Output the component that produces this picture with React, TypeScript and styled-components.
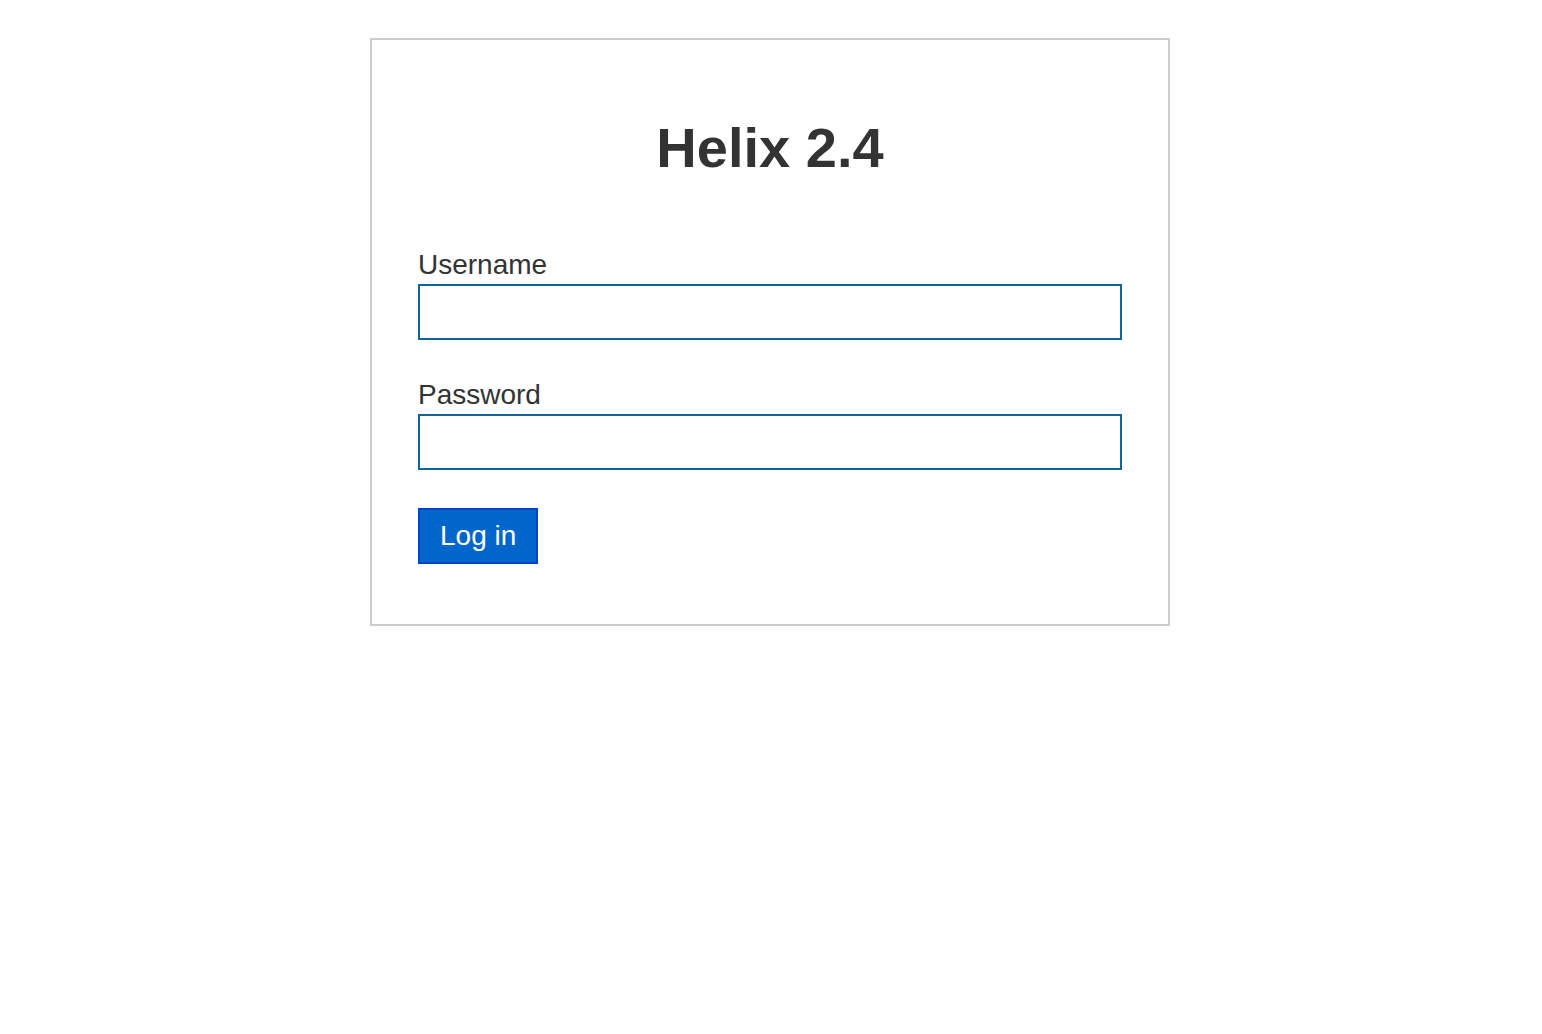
import styled, { createGlobalStyle } from 'styled-components';

const GlobalStyle = createGlobalStyle`
  html, body {
    margin: 0;
    padding: 0;
    background: #ffffff;
    font-family: 'Liberation Sans', Arial, sans-serif;
    color: #333333;
  }
`;

const Page = styled.div`
  padding: 38px 2px 0 0;
`;

const Card = styled.form`
  box-sizing: border-box;
  width: 800px;
  margin: 0 auto;
  padding: 76px 46px 60px;
  border: 2px solid #cccccc;
  background: #ffffff;
`;

const Title = styled.h1`
  margin: 0 0 69px;
  font-size: 56px;
  line-height: 64px;
  font-weight: 700;
  text-align: center;
  color: #333333;
`;

const Field = styled.div<{ $last?: boolean }>`
  margin-bottom: ${(p) => (p.$last ? '38px' : '39px')};
`;

const Label = styled.label`
  display: block;
  margin-bottom: 3px;
  font-size: 28px;
  line-height: 32px;
  color: #333333;
`;

const Input = styled.input`
  display: block;
  box-sizing: border-box;
  width: 100%;
  height: 56px;
  margin: 0;
  padding: 0 12px;
  border: 2px solid #10659c;
  border-radius: 0;
  font-family: inherit;
  font-size: 28px;
  color: #333333;
  background: #ffffff;
  outline: none;
`;

const SubmitButton = styled.button`
  box-sizing: border-box;
  height: 56px;
  margin: 0;
  padding: 0 20px;
  border: 2px solid #0046cc;
  border-radius: 0;
  background: #0066cc;
  color: #ffffff;
  font-family: inherit;
  font-size: 28px;
  line-height: 32px;
  cursor: pointer;
`;

export default function App() {
  return (
    <Page>
      <GlobalStyle />
      <Card onSubmit={(e) => e.preventDefault()}>
        <Title>Helix 2.4</Title>
        <Field>
          <Label htmlFor="username">Username</Label>
          <Input id="username" type="text" />
        </Field>
        <Field $last>
          <Label htmlFor="password">Password</Label>
          <Input id="password" type="password" />
        </Field>
        <SubmitButton type="submit">Log in</SubmitButton>
      </Card>
    </Page>
  );
}
